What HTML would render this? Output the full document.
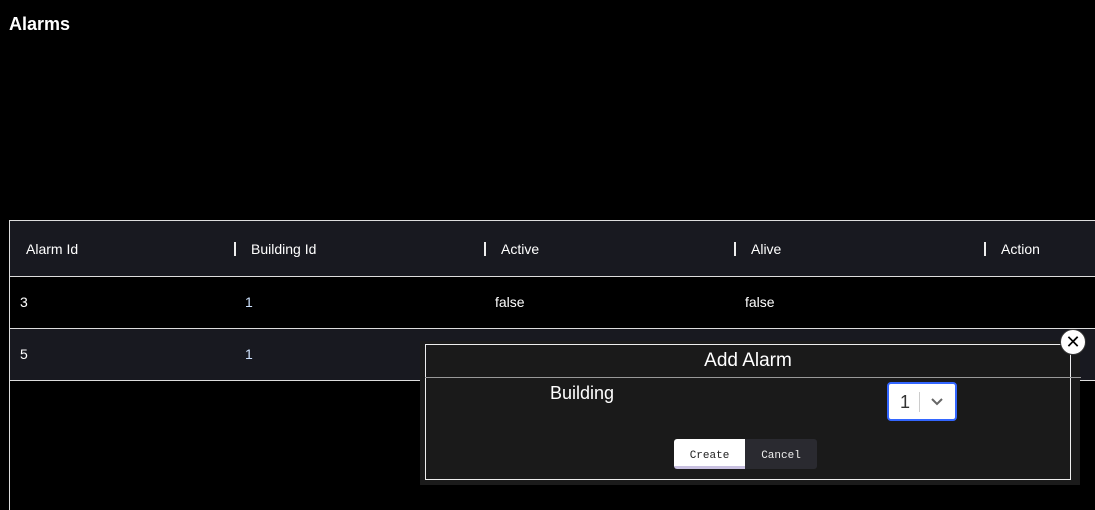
<!DOCTYPE html>
<html><head><style>
*{margin:0;padding:0;box-sizing:border-box}
body{width:1095px;height:502px;background:#000;overflow:hidden;position:relative;font-family:"Liberation Sans",sans-serif;color:#fff}
.t{position:absolute;left:9px;top:14px;font-size:18px;font-weight:bold}
.tbl{position:absolute;left:9px;top:220px;width:1100px;height:290px;border-left:1px solid #ddd;border-top:1px solid #ddd}
.row{position:absolute;left:0;width:1100px;border-bottom:1px solid #ddd}
.c{position:absolute;font-size:14px}
.sep{position:absolute;top:21px;width:2px;height:14px;background:#eee}
.b{color:#cfe3ff}
</style></head><body>
<div class="t">Alarms</div>
<div class="tbl">
 <div class="row" style="top:0;height:56px;background:#181920">
  <span class="c" style="left:16px;top:20px">Alarm Id</span>
  <span class="sep" style="left:224px"></span><span class="c" style="left:241px;top:20px">Building Id</span>
  <span class="sep" style="left:474px"></span><span class="c" style="left:491px;top:20px">Active</span>
  <span class="sep" style="left:724px"></span><span class="c" style="left:741px;top:20px">Alive</span>
  <span class="sep" style="left:974px"></span><span class="c" style="left:991px;top:20px">Action</span>
 </div>
 <div class="row" style="top:56px;height:52px;background:#000">
  <span class="c" style="left:10px;top:17px">3</span>
  <span class="c b" style="left:235px;top:17px">1</span>
  <span class="c" style="left:485px;top:17px">false</span>
  <span class="c" style="left:735px;top:17px">false</span>
 </div>
 <div class="row" style="top:108px;height:52px;background:#181920">
  <span class="c" style="left:10px;top:17px">5</span>
  <span class="c b" style="left:235px;top:17px">1</span>
 </div>
</div>
<div style="position:absolute;left:420px;top:341px;width:660px;height:144px;background:#1b1b1b"></div>
<div style="position:absolute;left:425px;top:344px;width:646px;height:136px;border:1px solid #eee;background:#1a1a1a">
 <div style="position:absolute;left:0;top:5px;width:100%;text-align:center;font-size:19px">Add Alarm</div>
 <div style="position:absolute;left:-1px;top:32px;width:656px;height:1px;background:#999"></div>
 <div style="position:absolute;left:124px;top:38px;font-size:18px">Building</div>
 <div style="position:absolute;left:461px;top:37px;width:70px;height:39px;background:#fff;border:2px solid #3366ff;border-radius:4px;color:#333">
  <span style="position:absolute;left:11px;top:8px;font-size:18px">1</span>
  <span style="position:absolute;left:30px;top:8px;width:1px;height:20px;background:#ccc"></span>
  <svg style="position:absolute;left:41px;top:12px" width="14" height="12" viewBox="0 0 14 12"><path d="M2 3l5 5 5-5" stroke="#666" stroke-width="2" fill="none"/></svg>
 </div>
 <div style="position:absolute;left:248px;top:94px;width:71px;height:30px;background:#fff;border-bottom:3px solid #c8c0e0;border-radius:3px 0 0 3px;color:#222;font:11px 'Liberation Mono',monospace;text-align:center;line-height:34px">Create</div>
 <div style="position:absolute;left:319px;top:94px;width:72px;height:30px;background:#2a2a30;border-radius:0 3px 3px 0;color:#eee;font:11px 'Liberation Mono',monospace;text-align:center;line-height:34px">Cancel</div>
</div>
<div style="position:absolute;left:1060px;top:329px;width:26px;height:26px;border-radius:50%;background:#fff;border:1px solid #333;color:#000;text-align:center;font-size:18px;line-height:24px">✕</div>
</body></html>
